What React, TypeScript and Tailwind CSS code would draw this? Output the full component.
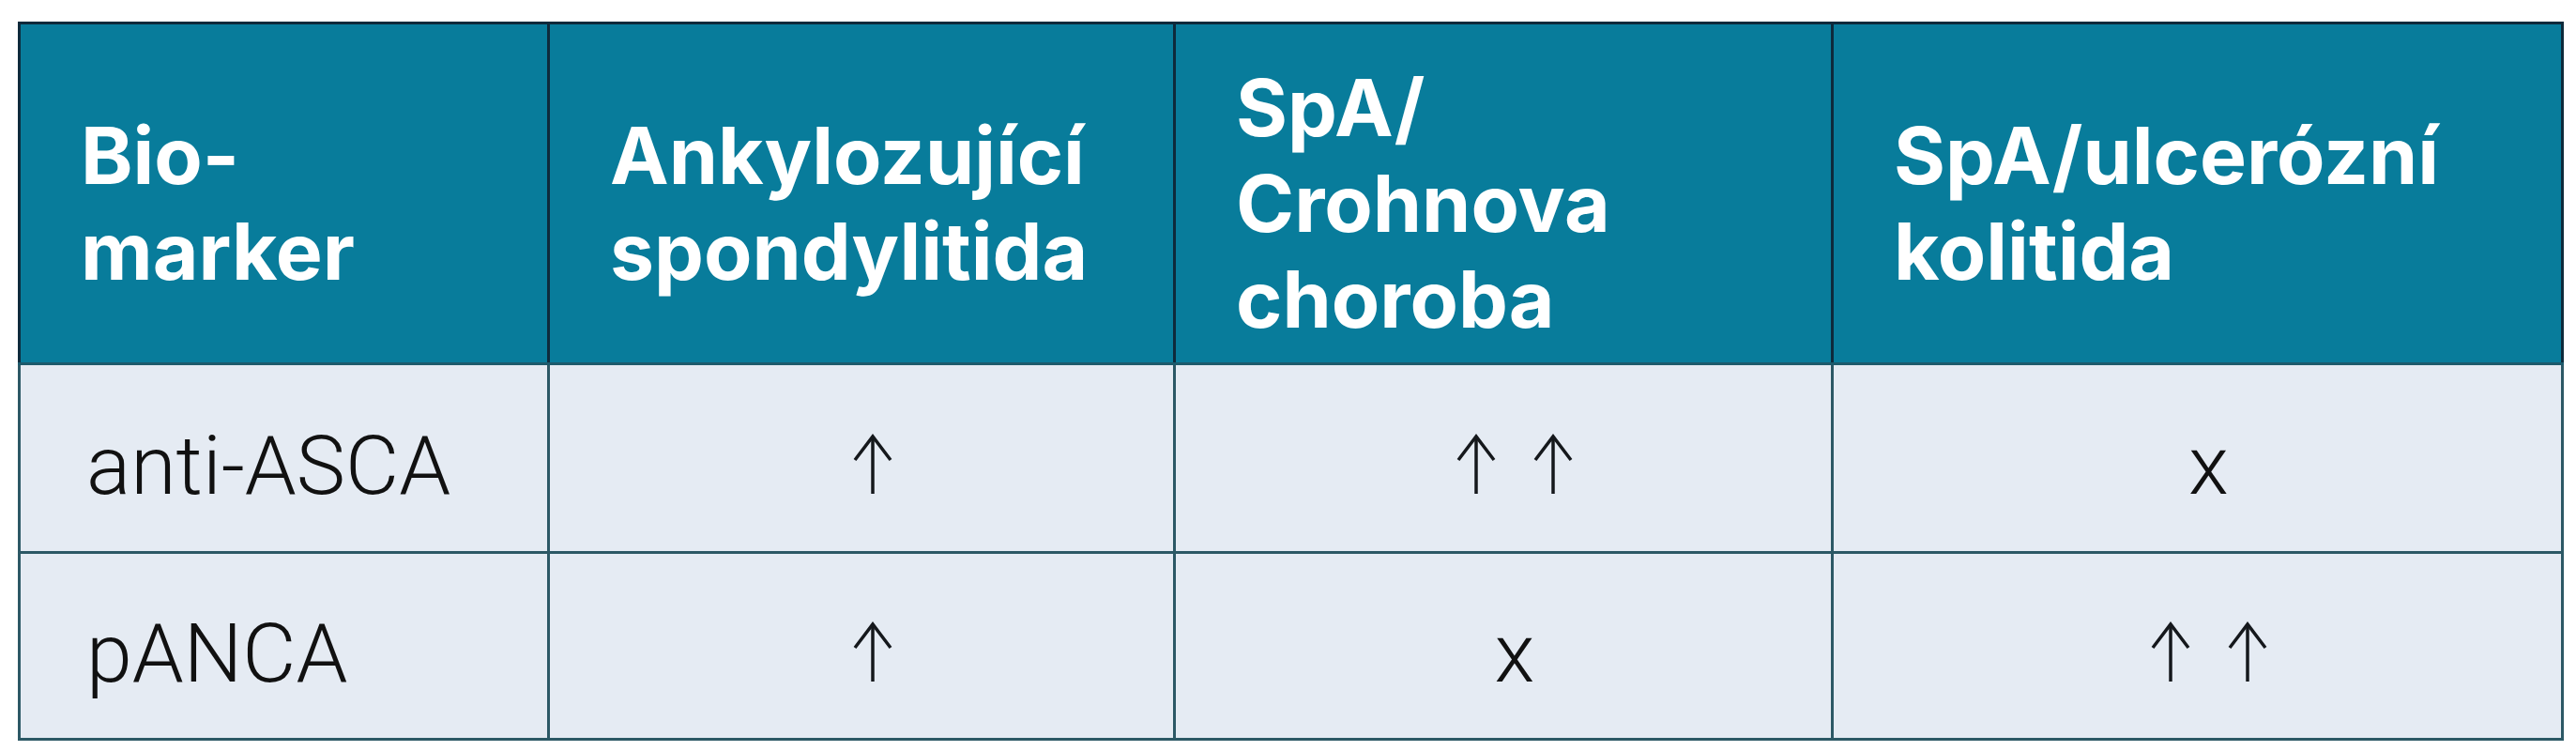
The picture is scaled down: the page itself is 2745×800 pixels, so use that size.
const HEAD = [
  ["Bio-", "marker"],
  ["Ankylozující", "spondylitida"],
  ["SpA/", "Crohnova", "choroba"],
  ["SpA/ulcerózní", "kolitida"],
];

// "up" = one arrow, "up2" = two arrows, "x" = no change
const ROWS: { name: string; cells: string[] }[] = [
  { name: "anti-ASCA", cells: ["up", "up2", "x"] },
  { name: "pANCA", cells: ["up", "x", "up2"] },
];

function Arrow() {
  return (
    <svg
      width="42"
      height="64"
      viewBox="0 0 42 64"
      className="inline-block"
      fill="none"
      stroke="#15181c"
      strokeWidth="3.5"
    >
      <line x1="21" y1="3" x2="21" y2="64" />
      <polyline points="2,28 21,3 40,28" />
    </svg>
  );
}

function Mark({ v }: { v: string }) {
  if (v === "x") return <span>x</span>;
  if (v === "up2")
    return (
      <span className="inline-flex gap-[40px] items-end">
        <Arrow />
        <Arrow />
      </span>
    );
  return (
    <span className="inline-flex items-end">
      <Arrow />
    </span>
  );
}

export default function App() {
  return (
    <div className="w-[2745px] h-[800px] bg-white pt-[23px] pl-[19px]">
      <table className="table-fixed border-collapse w-[2710px]">
        <colgroup>
          <col className="w-[564px]" />
          <col className="w-[667px]" />
          <col className="w-[701px]" />
          <col className="w-[778px]" />
        </colgroup>
        <thead>
          <tr className="h-[363px] bg-[#087c9b]">
            {HEAD.map((lines, i) => (
              <th
                key={i}
                className="border-[3px] border-[#0e2a3b] border-b-[#1d5a6c] align-middle text-left pl-[64px] pt-[22px] font-['Inter',sans-serif] font-bold text-[84px] leading-[102px] text-white"
              >
                {lines.map((l, j) => (
                  <div key={j}>{l}</div>
                ))}
              </th>
            ))}
          </tr>
        </thead>
        <tbody>
          {ROWS.map((r, ri) => (
            <tr
              key={r.name}
              className={`bg-[#e5ebf3] ${ri === 0 ? "h-[201px]" : "h-[199px]"}`}
            >
              <td className="border-[3px] border-[#2c5865] align-middle pl-[70px] pt-[16px] font-['Roboto',sans-serif] font-light text-[88px] leading-none text-[#111111]">
                {r.name}
              </td>
              {r.cells.map((c, ci) => (
                <td
                  key={ci}
                  className="border-[3px] border-[#2c5865] align-middle text-center pl-[24px] pt-[16px] font-['Roboto',sans-serif] font-light text-[88px] leading-none text-[#111111]"
                >
                  <Mark v={c} />
                </td>
              ))}
            </tr>
          ))}
        </tbody>
      </table>
    </div>
  );
}
